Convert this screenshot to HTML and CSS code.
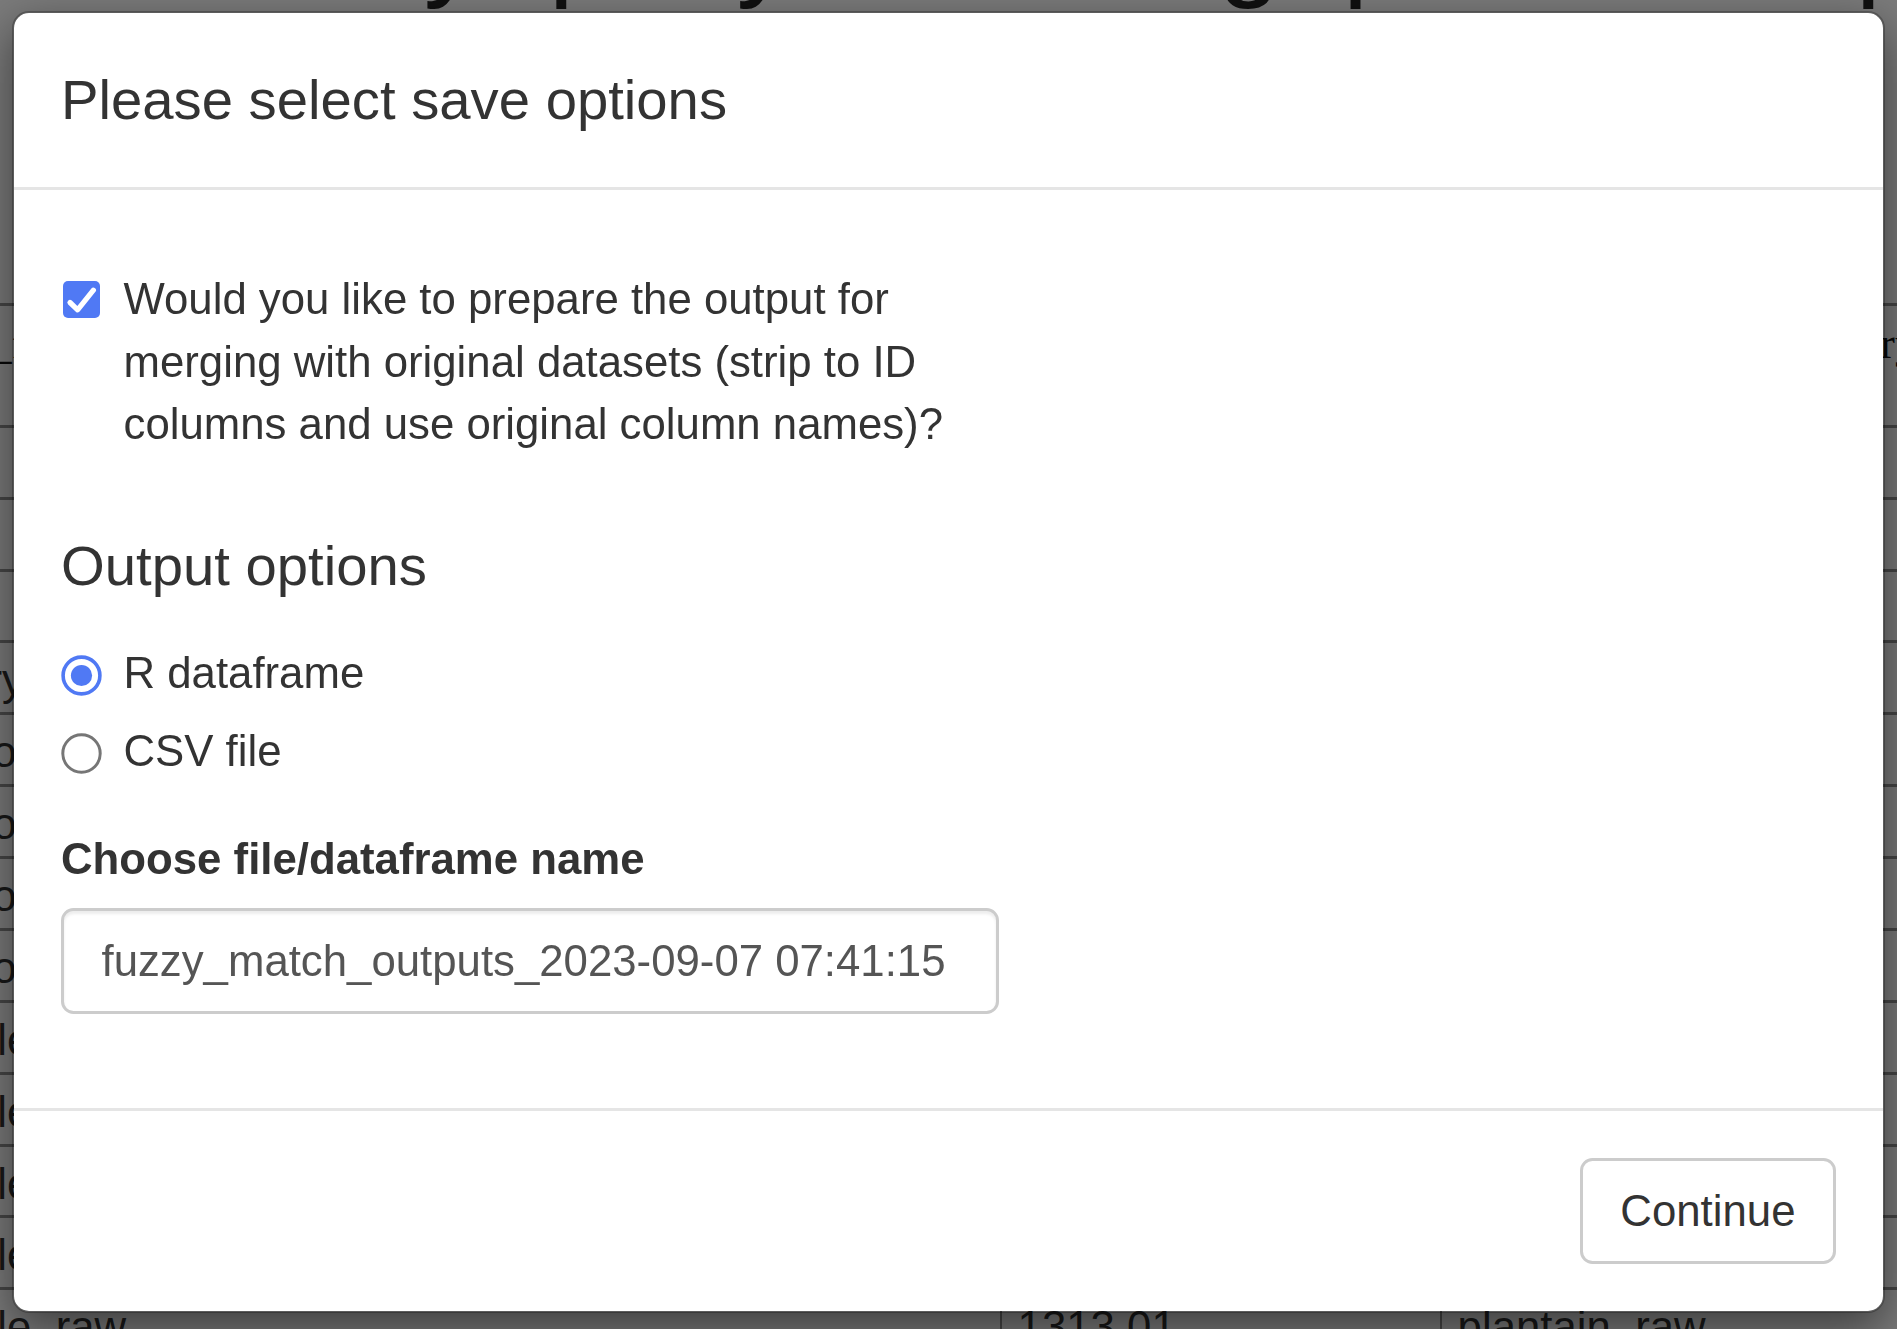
FILE: index.html
```html
<!DOCTYPE html>
<html lang="en">
<head>
<meta charset="utf-8">
<title>Please select save options</title>
<link rel="stylesheet" href="styles.css">
</head>
<body>
<div class="page">
  <h1 class="page-title">Fuzzy query matching: pick the top candidate per query</h1>
  <table class="results">
    <colgroup><col class="c1"><col class="c2"><col class="c3"></colgroup>
    <thead>
      <tr><th>matched_food_name</th><th>food_code</th><th>candidate_foods_category</th></tr>
    </thead>
    <tbody>
      <tr><td>rye_raw</td><td>1201.03</td><td>rye_flour_raw</td></tr>
      <tr><td>fig_raw</td><td>1204.11</td><td>fig_dried_raw</td></tr>
      <tr><td>oat_raw</td><td>1205.02</td><td>oat_bran_raw</td></tr>
      <tr><td>blueberry_raw</td><td>1207.14</td><td>bilberry_raw</td></tr>
      <tr><td>sweet potato_raw</td><td>1209.06</td><td>potato_raw</td></tr>
      <tr><td>sweet potato_raw</td><td>1209.07</td><td>yam_raw</td></tr>
      <tr><td>sweet potato_raw</td><td>1209.08</td><td>cassava_raw</td></tr>
      <tr><td>sweet potato_raw</td><td>1209.09</td><td>taro_raw</td></tr>
      <tr><td>vegetable_raw</td><td>1310.02</td><td>okra_raw</td></tr>
      <tr><td>vegetable_raw</td><td>1311.05</td><td>leek_raw</td></tr>
      <tr><td>vegetable_raw</td><td>1312.04</td><td>celery_raw</td></tr>
      <tr><td>vegetable_raw</td><td>1312.09</td><td>banana_raw</td></tr>
      <tr><td>vegetable_raw</td><td>1313.01</td><td>plantain_raw</td></tr>
    </tbody>
  </table>
</div>

<div class="backdrop"></div>

<div class="modal">
  <div class="modal-content">
    <div class="modal-header">
      <h4 class="modal-title">Please select save options</h4>
    </div>
    <div class="modal-body">
      <div class="checkbox">
        <label class="check-label">
          <span class="check-box">
            <svg width="37" height="37" viewBox="0 0 37 37" aria-hidden="true">
              <rect x="0" y="0" width="37" height="37" rx="5" ry="5" fill="#5079f4"/>
              <path d="M7 21.5 L14.6 28.8 L30.4 9.2" fill="none" stroke="#ffffff" stroke-width="5.2" stroke-linecap="round" stroke-linejoin="round"/>
            </svg>
          </span>
          <span class="check-text">Would you like to prepare the output for merging with original datasets (strip to ID columns and use original column names)?</span>
        </label>
      </div>

      <h4 class="section-title">Output options</h4>

      <div class="radio">
        <span class="radio-mark">
          <svg width="41" height="41" viewBox="0 0 41 41" aria-hidden="true">
            <circle cx="20.5" cy="20.5" r="18.4" fill="#ffffff" stroke="#5079f4" stroke-width="3.6"/>
            <circle cx="20.5" cy="20.5" r="10.6" fill="#5079f4"/>
          </svg>
        </span>
        <span class="radio-text">R dataframe</span>
      </div>
      <div class="radio">
        <span class="radio-mark">
          <svg width="41" height="41" viewBox="0 0 41 41" aria-hidden="true">
            <circle cx="20.5" cy="20.5" r="18.7" fill="#ffffff" stroke="#767676" stroke-width="3"/>
          </svg>
        </span>
        <span class="radio-text">CSV file</span>
      </div>

      <label class="control-label" for="fname">Choose file/dataframe name</label>
      <input id="fname" class="form-control" type="text" value="fuzzy_match_outputs_2023-09-07 07:41:15">
    </div>
    <div class="modal-footer">
      <button class="btn" type="button">Continue</button>
    </div>
  </div>
</div>
</body>
</html>
```

FILE: styles.css
```css
html, body {
  margin: 0;
  padding: 0;
}

body {
  width: 1897px;
  height: 1329px;
  overflow: hidden;
  background: #ffffff;
  color: #333333;
  font-family: "Liberation Sans", Arial, Helvetica, sans-serif;
  font-size: 43.75px;
  line-height: 62.5px;
}

/* ---------- page behind the dialog ---------- */
.page {
  width: 1897px;
}

.page-title {
  margin: -115px 0 0 180px;
  font-size: 112.5px;
  line-height: 123.75px;
  font-weight: normal;
  white-space: nowrap;
  color: #222222;
}

.results {
  margin: 294px 0 0 -174px;
  border-collapse: separate;
  border-spacing: 0;
  table-layout: fixed;
  width: 2314px;
}

.results .c1 { width: 1174px; }
.results .c2 { width: 440px; }
.results .c3 { width: 700px; }

.results th {
  font-family: "Liberation Serif", "Times New Roman", serif;
  font-weight: normal;
  text-align: left;
  color: #111111;
  padding: 6px 15.6px 50.5px;
  line-height: 62.5px;
  border-top: 3px solid #949494;
  white-space: nowrap;
}

.results td {
  padding: 8px 15.6px 2px;
  line-height: 58.875px;
  border-top: 3px solid #949494;
  white-space: nowrap;
  color: #333333;
}

.results td + td,
.results th + th {
  border-left: 2px solid #949494;
}

/* ---------- backdrop ---------- */
.backdrop {
  position: fixed;
  inset: 0;
  background: rgba(0, 0, 0, 0.52);
}

/* ---------- modal ---------- */
.modal {
  position: fixed;
  inset: 0;
  padding: 11px 12px 0 12px;
}

.modal-content {
  background: #ffffff;
  border: 2px solid rgba(0, 0, 0, 0.25);
  border-radius: 17px;
  box-shadow: 0 16px 47px rgba(0, 0, 0, 0.5);
  background-clip: padding-box;
}

.modal-header {
  padding: 47px;
  border-bottom: 3px solid #e5e5e5;
}

.modal-title {
  margin: 0;
  font-size: 56.25px;
  line-height: 80px;
  font-weight: normal;
  color: #333333;
}

.modal-body {
  padding: 47px;
}

.checkbox {
  margin-top: 31px;
  width: 937.5px;
}

.check-label {
  display: flex;
  align-items: flex-start;
  font-weight: normal;
}

.check-box {
  flex: none;
  display: block;
  width: 37px;
  height: 37px;
  margin: 13px 23.5px 0 2px;
}

.check-box svg,
.radio-mark svg {
  display: block;
}

.check-text {
  flex: 1;
}

.section-title {
  margin: 79px 0 45px;
  font-size: 56.25px;
  line-height: 62px;
  font-weight: normal;
  color: #333333;
}

.radio {
  display: flex;
  align-items: flex-start;
}

.radio + .radio {
  margin-top: 15.6px;
}

.radio-mark {
  flex: none;
  width: 41px;
  height: 41px;
  margin: 13px 21.5px 0 0;
}

.control-label {
  display: block;
  margin: 45.5px 0 18px;
  font-weight: bold;
  color: #333333;
}

.form-control {
  display: block;
  box-sizing: border-box;
  width: 937.5px;
  height: 106px;
  margin: 0 0 47px;
  padding: 18.75px 37.5px;
  border: 3px solid #cccccc;
  border-radius: 12.5px;
  background: #ffffff;
  box-shadow: inset 0 3px 3px rgba(0, 0, 0, 0.075);
  font-family: "Liberation Sans", Arial, Helvetica, sans-serif;
  font-size: 43.75px;
  line-height: 62.5px;
  color: #555555;
  outline: none;
}

.modal-footer {
  display: flex;
  justify-content: flex-end;
  padding: 47px;
  border-top: 3px solid #e5e5e5;
}

.btn {
  box-sizing: border-box;
  height: 106px;
  padding: 18.75px 37.5px;
  border: 3px solid #cccccc;
  border-radius: 12.5px;
  background: #ffffff;
  color: #333333;
  font-family: "Liberation Sans", Arial, Helvetica, sans-serif;
  font-size: 43.75px;
  line-height: 62.5px;
  cursor: pointer;
}
```
